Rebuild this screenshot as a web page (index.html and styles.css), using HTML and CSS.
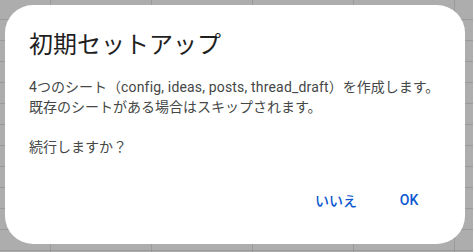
FILE: index.html
```html
<!DOCTYPE html>
<html lang="ja">
<head>
<meta charset="utf-8">
<link rel="stylesheet" href="styles.css">
</head>
<body>
<div class="sheet">
  <div class="dialog" role="dialog">
    <h1 class="title">初期セットアップ</h1>
    <div class="body">
      <p><span class="latin">4</span>つのシート（<span class="latin">config, ideas, posts, thread_draft</span>）を作成します。<br>既存のシートがある場合はスキップされます。</p>
      <p class="spacer">&nbsp;</p>
      <p>続行しますか？</p>
    </div>
    <div class="actions">
      <button class="btn">いいえ</button>
      <button class="btn">OK</button>
    </div>
  </div>
</div>
</body>
</html>
```
FILE: styles.css
```css
html, body {
  margin: 0;
  padding: 0;
  width: 473px;
  height: 252px;
  overflow: hidden;
}
body {
  font-family: Roboto, "Noto Sans CJK JP", sans-serif;
}
.sheet {
  width: 473px;
  height: 252px;
  box-sizing: border-box;
  padding: 5px 8px 8px 5px;
  background-color: #adadad;
  background-image:
    repeating-linear-gradient(to right, transparent 0px, transparent 50px, #9a9a9a 50px, #9a9a9a 51px, transparent 51px, transparent 101px),
    repeating-linear-gradient(to bottom, transparent 0px, transparent 19px, #9a9a9a 19px, #9a9a9a 20px, transparent 20px, transparent 21px);
}
.dialog {
  width: 460px;
  height: 239px;
  box-sizing: border-box;
  background: #ffffff;
  border-radius: 28px;
  padding: 24px;
  display: flex;
  flex-direction: column;
}
.title {
  margin: 0;
  font-size: 24px;
  line-height: 32px;
  font-weight: 400;
  color: #1f1f1f;
}
.body {
  margin-top: 16px;
  font-size: 14px;
  line-height: 20px;
  color: #444746;
}
.body p {
  margin: 0;
}
.latin {
  letter-spacing: 0.17px;
}
.actions {
  margin-top: auto;
  display: flex;
  justify-content: flex-end;
  gap: 8px;
}
.btn {
  font-family: Roboto, "Noto Sans CJK JP", sans-serif;
  font-size: 14px;
  font-weight: 500;
  color: #0b57d0;
  background: transparent;
  border: none;
  height: 40px;
  min-width: 64px;
  padding: 0 12px;
  border-radius: 20px;
  cursor: pointer;
}
```
